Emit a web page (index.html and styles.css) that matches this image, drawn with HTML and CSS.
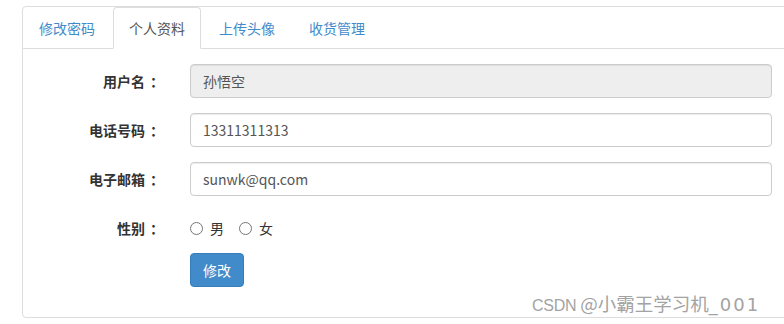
FILE: index.html
```html
<!DOCTYPE html>
<html lang="zh">
<head>
<meta charset="utf-8">
<title>个人资料</title>
<link rel="stylesheet" href="styles.css">
</head>
<body>
<div class="panel">
  <ul class="tabs">
    <li class="tab"><a>修改密码</a></li>
    <li class="tab active"><a>个人资料</a></li>
    <li class="tab"><a>上传头像</a></li>
    <li class="tab"><a>收货管理</a></li>
  </ul>
  <form class="form">
    <div class="row">
      <label class="label">用户名<span class="colon">：</span></label>
      <div class="input disabled">孙悟空</div>
    </div>
    <div class="row">
      <label class="label">电话号码<span class="colon">：</span></label>
      <div class="input">13311311313</div>
    </div>
    <div class="row">
      <label class="label">电子邮箱<span class="colon">：</span></label>
      <div class="input">sunwk@qq.com</div>
    </div>
    <div class="row radio-row">
      <label class="label">性别<span class="colon">：</span></label>
      <div class="radios">
        <span class="radio"><span class="circle"></span>男</span>
        <span class="radio"><span class="circle"></span>女</span>
      </div>
    </div>
    <div class="row btn-row">
      <span></span>
      <div><button type="button" class="btn">修改</button></div>
    </div>
  </form>
</div>
<div class="watermark"><span class="wm-latin">CSDN</span> @小霸王学习机<span class="wm-num">_001</span></div>
</body>
</html>
```
FILE: styles.css
```css
* { box-sizing: border-box; }
html, body { margin: 0; padding: 0; background: #fff; }
body {
  font-family: "Microsoft YaHei", "Noto Sans CJK SC", "Liberation Sans", sans-serif;
  font-size: 14px;
  color: #333;
  line-height: 20px;
  width: 784px;
  height: 324px;
  overflow: hidden;
  position: relative;
  padding: 6px 0 0 22px;
}
.panel {
  width: 800px;
  height: 312px;
  border: 1px solid #ddd;
  border-radius: 4px;
}
.tabs {
  list-style: none;
  margin: 0;
  padding: 0;
  display: flex;
  border-bottom: 1px solid #ddd;
  height: 42px;
}
.tab {
  margin-right: 2px;
  margin-bottom: -1px;
}
.tab a {
  display: block;
  padding: 10px 15px;
  border: 1px solid transparent;
  border-radius: 4px 4px 0 0;
  color: #428bca;
  line-height: 20px;
  height: 42px;
}
.tab.active a {
  color: #555;
  background: #fff;
  border-color: #ddd #ddd transparent #ddd;
}
.form {
  padding-top: 15px;
  display: flex;
  flex-direction: column;
  gap: 15px;
}
.row {
  display: grid;
  grid-template-columns: 136px 582px;
  column-gap: 31px;
}
.label {
  text-align: right;
  font-weight: bold;
  padding-top: 7px;
  line-height: 20px;
}
.colon {
  padding-left: 5px;
  margin-right: -5px;
}
.input {
  height: 34px;
  padding: 6px 12px;
  border: 1px solid #ccc;
  border-radius: 4px;
  color: #555;
  line-height: 20px;
  box-shadow: inset 0 1px 1px rgba(0,0,0,.075);
}
.input.disabled { background: #eee; }
.radio-row { min-height: 27px; }
.radios {
  display: flex;
  gap: 15px;
  padding-top: 7px;
  line-height: 20px;
}
.radio {
  display: flex;
  align-items: center;
  gap: 7px;
}
.circle {
  width: 13px;
  height: 13px;
  border: 1px solid #767676;
  border-radius: 50%;
  background: #fff;
}
.btn {
  font: inherit;
  height: 34px;
  padding: 6px 12px;
  line-height: 20px;
  color: #fff;
  background: #428bca;
  border: 1px solid #357ebd;
  border-radius: 4px;
}
.watermark {
  position: absolute;
  left: 532px;
  top: 291px;
  font-family: "Noto Sans CJK SC", "Liberation Sans", sans-serif;
  font-size: 18.5px;
  line-height: 24px;
  color: #a3a3a3;
  text-shadow: 0 0 1px #fff;
  white-space: nowrap;
}
.wm-latin {
  font-family: "Liberation Sans", sans-serif;
  font-size: 16px;
  letter-spacing: -0.3px;
}
.wm-num {
  font-family: "DejaVu Sans", sans-serif;
  font-size: 18px;
  letter-spacing: 2px;
}
```
